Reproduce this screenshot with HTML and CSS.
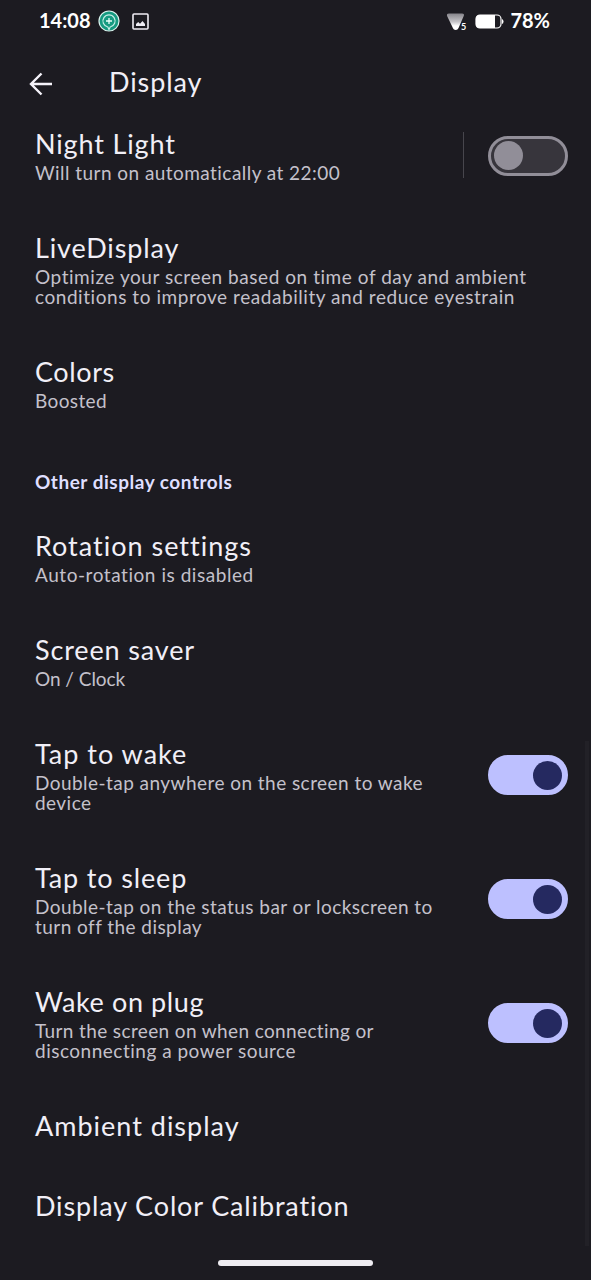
FILE: index.html
```html
<!DOCTYPE html>
<html lang="en">
<head>
<meta charset="utf-8">
<title>Display</title>
<link rel="stylesheet" href="styles.css">
</head>
<body>
<div class="screen">
  <header class="status">
    <span class="clock">14:08</span>
    <svg class="badge" width="22" height="22" viewBox="0 0 22 22" fill="none">
      <circle cx="11" cy="11" r="10" fill="#159a80" stroke="#d9f3ee" stroke-width="1.2"/>
      <path d="M9.800 17A6.100 6.100 0 1 1 12.200 17L11 19.500Z" stroke="#c5eee6" stroke-width="1.2"/>
      <path d="M11 8v6M8 11h6" stroke="#e8fffa" stroke-width="1.3"/>
    </svg>
    <svg class="photo" width="17" height="17" viewBox="0 0 17 17" fill="none">
      <rect x="1" y="1" width="15" height="15" rx="1" stroke="#efedf4" stroke-width="1.6"/>
      <path d="M4 13V11L6.200 9l1.800 1.800L10.500 8 13 11V13Z" fill="#efedf4"/>
    </svg>
    <span class="grow"></span>
    <svg class="wifi" width="22" height="20" viewBox="0 0 22 20">
      <defs><linearGradient id="signal" x1="0" y1="0" x2="0" y2="1"><stop offset="0" stop-color="#85848a"/><stop offset=".5" stop-color="#c5c4c8"/><stop offset=".75" stop-color="#fff"/></linearGradient></defs>
      <path d="M2.300 4.500Q1 1.500 4 1.500H17Q20 1.500 18.500 4.500L14.200 14.500Q13 18 10.700 18T7.200 14.500Z" fill="url(#signal)"/>
      <path d="M17 11H22V20H15L15.600 13Z" fill="#1c1b21"/>
      <text class="band" x="16" y="18">5</text>
    </svg>
    <svg class="battery" width="29" height="15" viewBox="0 0 29 15" fill="none">
      <rect x="1" y="1" width="25" height="13" rx="4" stroke="#fff" stroke-width="1.2"/>
      <path d="M4.500 1H20V14H4.500Q1 14 1 10.500V4.500Q1 1 4.500 1Z" fill="#fff"/>
      <path d="M27 5Q28.500 5.500 28.500 7.500T27 10Z" fill="#fff"/>
    </svg>
    <span class="percent">78%</span>
  </header>
  <div class="appbar">
    <svg class="back" width="24" height="24" viewBox="0 0 24 24" fill="none" stroke="#f5f3fa" stroke-width="2.400"><path d="M23 12H2M12.500 1.500L2 12l10.500 10.500"/></svg>
    <h1 class="heading">Display</h1>
  </div>
  <main class="list">
    <section class="row"><div class="text"><h2 class="title">Night Light</h2><p class="summary">Will turn on automatically at 22:00</p></div><i class="divider"></i><div class="switch"><i class="thumb"></i></div></section>
    <section class="row"><div class="text"><h2 class="title">LiveDisplay</h2><p class="summary wide">Optimize your screen based on time of day and ambient<br>conditions to improve readability and reduce eyestrain</p></div></section>
    <section class="row"><div class="text"><h2 class="title snug">Colors</h2><p class="summary narrow">Boosted</p></div></section>
    <h3 class="category">Other display controls</h3>
    <section class="row"><div class="text"><h2 class="title loose">Rotation settings</h2><p class="summary wide">Auto-rotation is disabled</p></div></section>
    <section class="row"><div class="text"><h2 class="title">Screen saver</h2><p class="summary tight">On / Clock</p></div></section>
    <section class="row"><div class="text"><h2 class="title loose">Tap to wake</h2><p class="summary">Double-tap anywhere on the screen to wake<br>device</p></div><div class="switch on"><i class="thumb"></i></div></section>
    <section class="row"><div class="text"><h2 class="title">Tap to sleep</h2><p class="summary">Double-tap on the status bar or lockscreen to<br>turn off the display</p></div><div class="switch on"><i class="thumb"></i></div></section>
    <section class="row"><div class="text"><h2 class="title snug">Wake on plug</h2><p class="summary narrow">Turn the screen on when connecting or<br><span class="spread">disconnecting a power source</span></p></div><div class="switch on"><i class="thumb"></i></div></section>
    <section class="row"><div class="text"><h2 class="title loose">Ambient display</h2></div></section>
    <section class="row"><div class="text"><h2 class="title">Display Color Calibration</h2></div></section>
  </main>
  <i class="scrollbar"></i>
  <i class="home"></i>
</div>
</body>
</html>
```

FILE: styles.css
```css
* { box-sizing: border-box; }
body { margin: 0; background: #1c1b21; color: #f1eff7; font-family: Lato, sans-serif; font-variant-ligatures: none; }
h1, h2, h3, p { margin: 0; font-weight: 400; }
.screen { position: relative; width: 591px; height: 1280px; overflow: hidden; display: flex; flex-direction: column; }
.status { height: 42px; display: flex; align-items: center; padding: 0 41px 0 39px; font-size: 20px; font-weight: 700; color: #fff; }
.clock, .percent { margin-top: -2px; }
.badge { margin-left: 7px; }
.photo { margin-left: 12px; }
.grow { flex: 1; }
.wifi { margin-top: 1px; }
.battery { margin: 0 6px 0 8px; }
.band { font: 700 9px Lato, sans-serif; fill: #fff; }
.appbar { height: 61px; display: flex; align-items: center; padding: 22px 0 0 29px; }
.heading { margin: -4px 0 0 56px; font-size: 27px; line-height: 32px; letter-spacing: .9px; }
.list { display: flex; flex-direction: column; }
.row { display: flex; align-items: center; padding: 25px 23px 23px 35px; }
.text { flex: 1; }
.title { font-size: 27px; line-height: 32px; letter-spacing: .86px; white-space: nowrap; }
.title.loose { letter-spacing: 1px; }
.title.snug { letter-spacing: .6px; }
.summary { margin-top: 3px; padding-bottom: 1px; font-size: 19px; line-height: 20.4px; letter-spacing: .45px; color: #c4c1cb; white-space: nowrap; height: 21px; }
.summary:has(br) { height: 41px; }
.summary.wide { letter-spacing: .55px; }
.summary.narrow { letter-spacing: .37px; }
.summary.tight { letter-spacing: -.04px; }
.spread { letter-spacing: .5px; }
.category { height: 70px; padding: 35px 35px 0; font-size: 19px; line-height: 24px; letter-spacing: .52px; font-weight: 700; color: #dfdfff; }
.divider { width: 1px; height: 46px; margin: -2px 24px 0 0; background: #47464d; }
.switch { width: 80px; height: 40px; margin-top: -1px; padding: 3px; border: 3px solid #918e98; border-radius: 20px; background: #37353c; display: flex; align-items: center; }
.thumb { width: 29px; height: 29px; border-radius: 50%; background: #918e98; }
.on { margin-top: -2px; background: #bdc0ff; border-color: #bdc0ff; justify-content: flex-end; }
.on .thumb { background: #252960; }
.scrollbar { position: absolute; left: 585px; top: 741px; width: 4px; height: 505px; background: #222127; }
.home { position: absolute; left: 218px; top: 1260px; width: 155px; height: 6px; border-radius: 3px; background: #efedf2; }
```
